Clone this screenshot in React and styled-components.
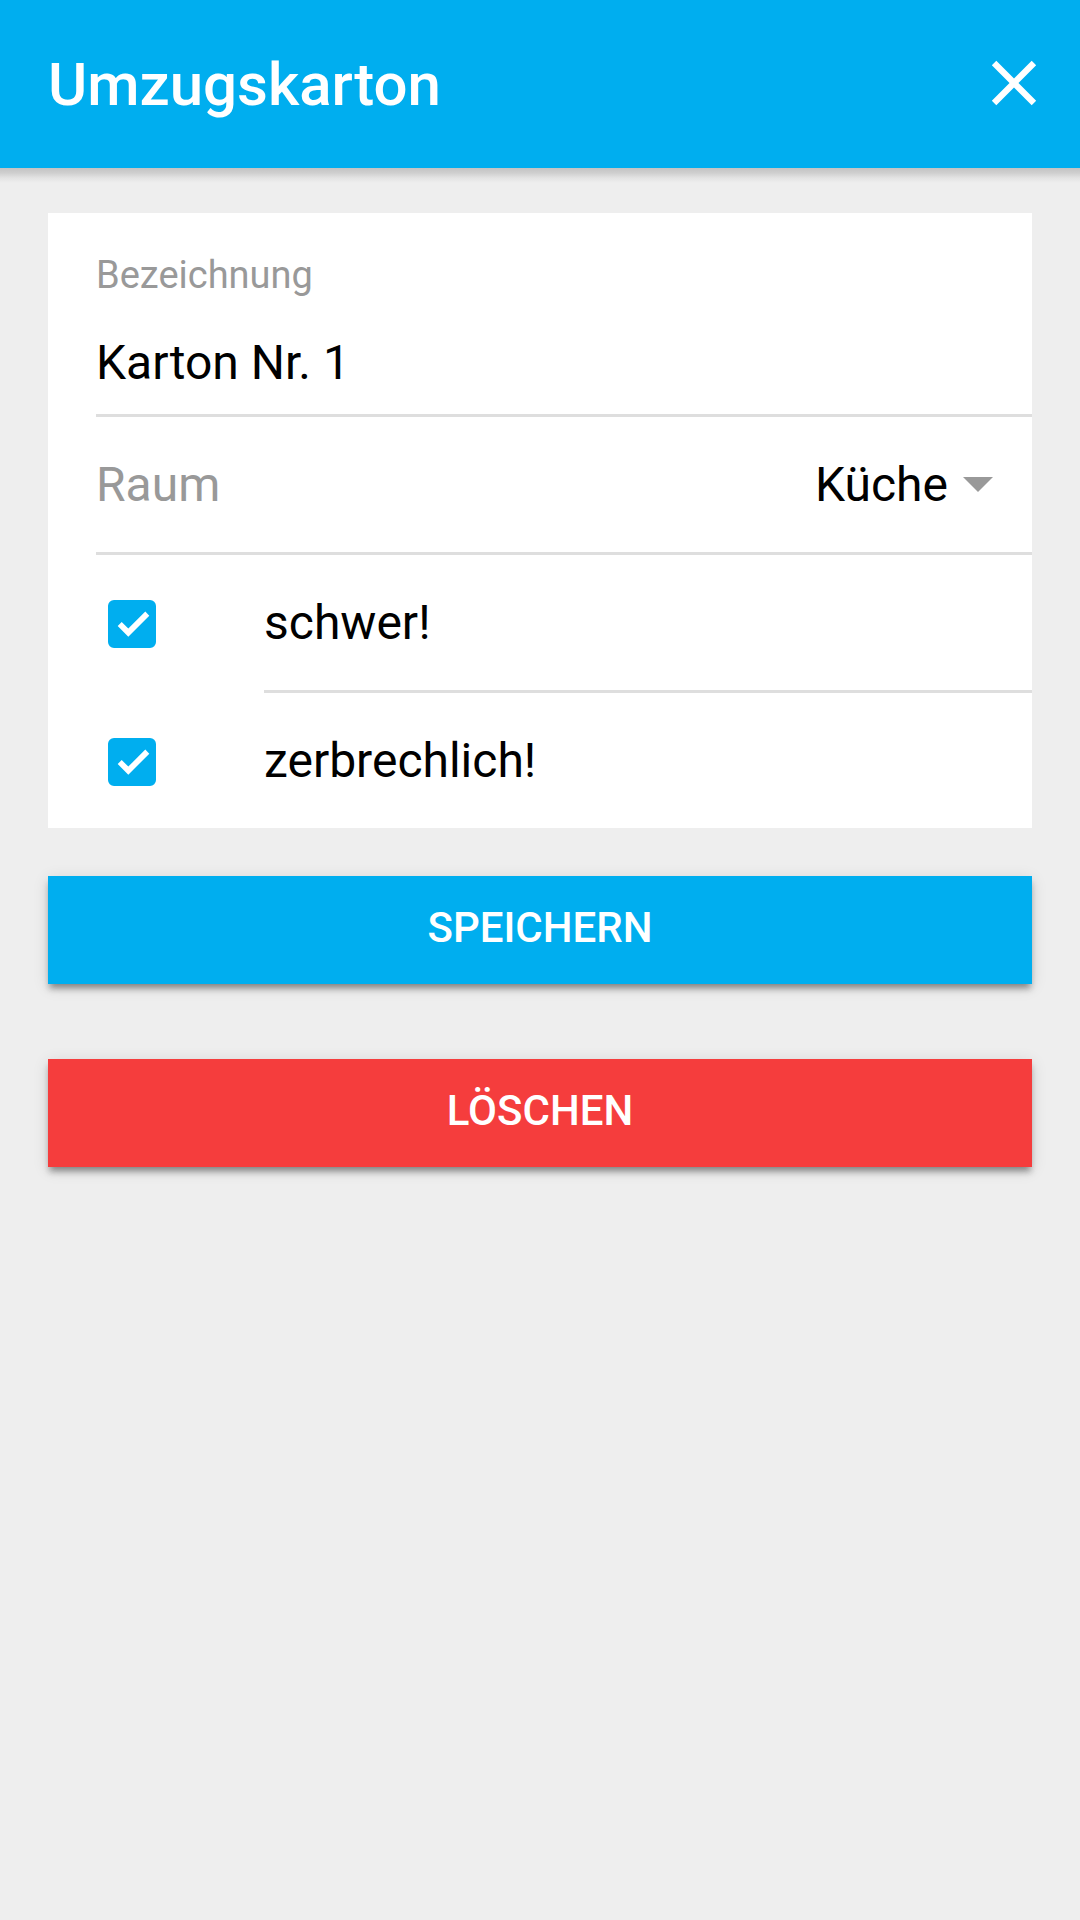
import React, { useState } from "react";
import styled, { createGlobalStyle } from "styled-components";

const GlobalStyle = createGlobalStyle`
  *, *::before, *::after { box-sizing: border-box; }
  body {
    margin: 0;
    background: #eee;
    color: #000;
    font-family: Roboto, "Noto Sans", sans-serif;
    font-size: 48px;
  }
`;

const Toolbar = styled.header`
  position: relative;
  display: flex;
  align-items: center;
  justify-content: space-between;
  height: 168px;
  padding: 0 28px 0 48px;
  background: #00aeef;

  &::after {
    content: "";
    position: absolute;
    top: 100%;
    left: 0;
    right: 0;
    height: 15px;
    background: linear-gradient(#c3c3c3, #cfcfcf 33%, #e3e3e3 66%, #eee);
  }
`;

const Title = styled.h1`
  margin: 0;
  color: #fff;
  font-size: 60px;
  font-weight: 500;
`;

const CloseButton = styled.button`
  display: flex;
  margin: 0 0 2px;
  padding: 0;
  border: 0;
  background: none;
  color: #fff;
`;

const Content = styled.form`
  padding: 45px 48px 48px;
`;

const Card = styled.div`
  padding-left: 48px;
  background: #fff;
`;

const Divided = styled.div`
  border-bottom: ${(p) => (p.$last ? 0 : 3)}px solid #dedede;
`;

const StackedField = styled(Divided)`
  display: flex;
  flex-direction: column;
  padding-top: 40px;
`;

const StackedLabel = styled.label`
  color: #999;
  font-size: 38px;
  line-height: 45px;
`;

const TextInput = styled.input`
  height: 116px;
  padding: 12px 0 0;
  border: 0;
  outline: 0;
  background: none;
  color: inherit;
  font: inherit;
`;

const SelectRow = styled(Divided)`
  display: flex;
  align-items: center;
  height: 138px;
  padding-right: 39px;
`;

const RowLabel = styled.label`
  flex: 1;
  color: ${(p) => (p.$muted ? "#999" : "inherit")};
`;

const Overlay = styled.span`
  display: grid;
  align-items: center;

  > * { grid-area: 1 / 1; }
  > svg { justify-self: end; pointer-events: none; }
`;

const Select = styled.select`
  appearance: none;
  padding: 0 45px 0 0;
  border: 0;
  outline: 0;
  background: none;
  color: inherit;
  font: inherit;
  text-align-last: right;
`;

const CheckRow = styled.div`
  display: flex;
  align-items: flex-start;
  padding-left: 12px;
`;

const CheckBoxArea = styled(Overlay)`
  padding-top: 45px;
`;

const Checkbox = styled.input`
  appearance: none;
  width: 48px;
  height: 48px;
  margin: 0;
  border: 6px solid #00aeef;
  border-radius: 6px;

  &:checked { background: #00aeef; }
`;

const CheckText = styled(Divided)`
  display: flex;
  flex: 1;
  align-items: center;
  height: ${(p) => (p.$last ? 135 : 138)}px;
  margin-left: 108px;
`;

const ActionButton = styled.button`
  display: block;
  width: 100%;
  height: 108px;
  margin: ${(p) => p.$gap}px 0 0;
  padding: 0 0 6px;
  border: 0;
  background: ${(p) => p.$color};
  box-shadow: 0 6px 6px rgba(0, 0, 0, 0.14), 0 3px 15px rgba(0, 0, 0, 0.12),
    0 6px 6px -3px rgba(0, 0, 0, 0.3);
  color: #fff;
  font: 500 42px Roboto, "Noto Sans", sans-serif;
  text-transform: uppercase;
`;

function CheckItem({ id, label, last }) {
  const [checked, setChecked] = useState(true);
  return (
    <CheckRow>
      <CheckBoxArea>
        <Checkbox
          id={id}
          type="checkbox"
          checked={checked}
          onChange={(e) => setChecked(e.target.checked)}
        />
        {checked && (
          <svg width="48" height="48" viewBox="0 0 48 48" aria-hidden="true">
            <path fill="#fff" d="M9.7 26l4-4 6.6 6.6 17-17 4 4.1-21 21z" />
          </svg>
        )}
      </CheckBoxArea>
      <CheckText $last={last}>
        <RowLabel htmlFor={id}>{label}</RowLabel>
      </CheckText>
    </CheckRow>
  );
}

export default function App() {
  return (
    <>
      <GlobalStyle />
      <Toolbar>
        <Title>Umzugskarton</Title>
        <CloseButton type="button" aria-label="Schließen">
          <svg width="76" height="76" viewBox="0 0 24 24" aria-hidden="true">
            <path
              fill="currentColor"
              d="M19 6.41L17.59 5 12 10.59 6.41 5 5 6.41 10.59 12 5 17.59 6.41 19 12 13.41 17.59 19 19 17.59 13.41 12z"
            />
          </svg>
        </CloseButton>
      </Toolbar>
      <Content onSubmit={(e) => e.preventDefault()}>
        <Card>
          <StackedField>
            <StackedLabel htmlFor="name">Bezeichnung</StackedLabel>
            <TextInput id="name" type="text" defaultValue="Karton Nr. 1" />
          </StackedField>
          <SelectRow>
            <RowLabel htmlFor="room" $muted>Raum</RowLabel>
            <Overlay>
              <Select id="room" defaultValue="Küche">
                <option>Küche</option>
              </Select>
              <svg width="30" height="15" viewBox="0 0 30 15" aria-hidden="true">
                <path fill="#999" d="M0 0h30L15 15z" />
              </svg>
            </Overlay>
          </SelectRow>
          <CheckItem id="heavy" label="schwer!" />
          <CheckItem id="fragile" label="zerbrechlich!" last />
        </Card>
        <ActionButton type="submit" $color="#00aeef" $gap={48}>Speichern</ActionButton>
        <ActionButton type="button" $color="#f53d3d" $gap={75}>Löschen</ActionButton>
      </Content>
    </>
  );
}
